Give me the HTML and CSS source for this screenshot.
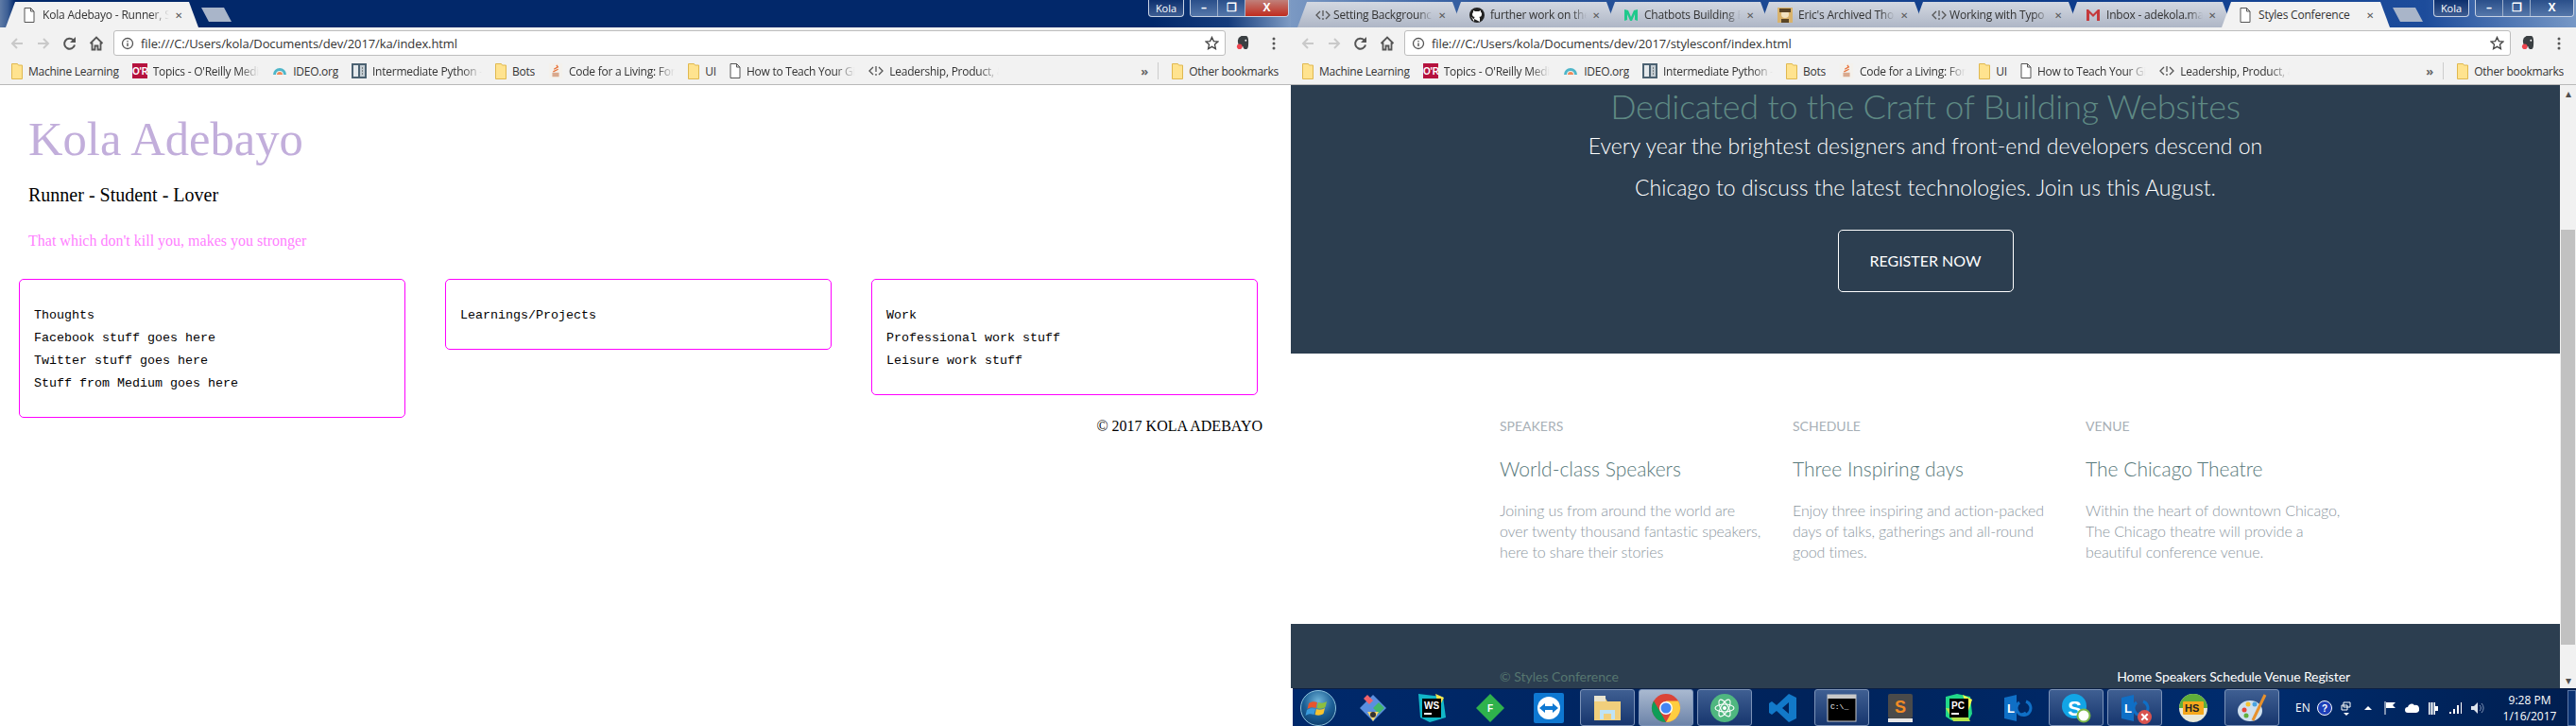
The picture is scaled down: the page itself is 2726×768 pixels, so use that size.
FILE: index.html
```html
<!DOCTYPE html>
<html>
<head>
    <title>Two browser windows</title>
    <link rel="stylesheet" href="styles.css">
</head>
<body>
    <!-- Shared icons -->
    <svg class="icon-defs">
        <defs>
            <radialGradient id="orb-glow" cx="50%" cy="30%" r="75%"><stop offset="0" stop-color="#6fb4d8"/><stop offset=".55" stop-color="#1c5f96"/><stop offset="1" stop-color="#0b3a68"/></radialGradient>
        </defs>
        <symbol id="i-folder" viewBox="0 0 12 18"><path d="M.5 1.5h6l1 1.5h4v14.500h-11z" fill="#ffe38f" stroke="#e0b84f"/></symbol>
        <symbol id="i-page" viewBox="0 0 12 16"><path d="M1 .5h6.500l3.500 3.500v11.500h-10z M7.500 .5v3.500h3.500" fill="#fff" stroke="#555"/></symbol>
        <symbol id="i-code" viewBox="0 0 16 12"><path d="M5 2l-4 4 4 4M11 2l4 4-4 4M8 1v6M8 9v2" fill="none" stroke="#555" stroke-width="1.300"/></symbol>
        <symbol id="i-oreilly" viewBox="0 0 16 16"><rect width="16" height="16" fill="#b5123e"/><text x="0" y="12" font-size="10" font-weight="700" fill="#fff" font-family="Liberation Sans">O'R</text></symbol>
        <symbol id="i-ideo" viewBox="0 0 16 10"><path d="M1 9a7 7 0 0 1 14 0h-3a4 4 0 0 0-8 0z" fill="#4fb6c9"/><path d="M5 9a3 3 0 0 1 6 0z" fill="#ef8a5a"/></symbol>
        <symbol id="i-grid" viewBox="0 0 16 16"><rect width="16" height="16" fill="#4c6272"/><rect x="2" y="2" width="5" height="12" fill="#e5e9ec"/><rect x="9" y="2" width="5" height="12" fill="#c3ccd2"/><path d="M11 5h1M11 8h1M11 11h1" stroke="#333"/></symbol>
        <symbol id="i-stack" viewBox="0 0 16 18"><rect width="16" height="18" fill="#f4f1ec"/><path d="M4 11h8v5H4z" fill="#d9a98d"/><path d="M5 10l6-3M6 7l5-3M9 2l2 3" stroke="#e8743b" stroke-width="1.500"/></symbol>
        <symbol id="i-back" viewBox="0 0 16 16"><path d="M14 8H3M8 3L3 8l5 5" fill="none" stroke="currentColor" stroke-width="2"/></symbol>
        <symbol id="i-forward" viewBox="0 0 16 16"><path d="M2 8h11M8 3l5 5-5 5" fill="none" stroke="currentColor" stroke-width="2"/></symbol>
        <symbol id="i-reload" viewBox="0 0 16 16"><path d="M13 9.500a5.500 5.500 0 1 1-1.500-5.200" fill="none" stroke="#555" stroke-width="2"/><path d="M14 1v6H8z" fill="#555"/></symbol>
        <symbol id="i-home" viewBox="0 0 16 16"><path d="M1.500 8L8 1.500 14.500 8M3.500 7v7.500h3v-4h3v4h3V7" fill="none" stroke="#555" stroke-width="1.800"/></symbol>
        <symbol id="i-info" viewBox="0 0 16 16"><circle cx="8" cy="8" r="6.300" fill="none" stroke="#555" stroke-width="1.500"/><path d="M8 4.500v1.500M8 7.500v4" stroke="#555" stroke-width="1.600"/></symbol>
        <symbol id="i-star" viewBox="0 0 16 16"><path d="M8 1.500l2 4.500 4.800.5-3.600 3.200 1 4.800L8 12.100 3.800 14.500l1-4.800L1.200 6.500 6 6z" fill="none" stroke="#444" stroke-width="1.400"/></symbol>
        <symbol id="i-evernote" viewBox="0 0 16 18"><path d="M3 3l3-2h5c2 0 3 2 3 6 0 5 0 9-3 9-2 0-3-1-3-3H5C3 13 2 9 2 6z" fill="#3a3f42"/><circle cx="4" cy="13" r="3" fill="#f0444f"/><circle cx="11" cy="6" r="1" fill="#fff"/></symbol>
        <symbol id="i-dots" viewBox="0 0 4 16"><circle cx="2" cy="3" r="1.500" fill="#555"/><circle cx="2" cy="8" r="1.500" fill="#555"/><circle cx="2" cy="13" r="1.500" fill="#555"/></symbol>
        <symbol id="i-lync" viewBox="0 0 32 32"><path d="M2 5l13-3v28L2 27z" fill="#0f6fc6"/><text x="5" y="21" font-size="13" font-weight="700" fill="#fff" font-family="Liberation Sans">L</text><path d="M25 9a7.500 7.500 0 1 1-7 1M17 22a7.500 7.500 0 0 0 8-1" fill="none" stroke="#0f6fc6" stroke-width="3"/></symbol>
    </svg>

    <div class="desktop">
        <!-- Left window -->
        <div class="window window-left">
            <div class="titlebar titlebar-left">
                <div class="tab tab-active tab-wide">
                    <svg class="tab-icon"><use href="#i-page"/></svg>
                    <span class="tab-title">Kola Adebayo - Runner, S</span>
                    <span class="tab-close">&#10005;</span>
                </div>
                <div class="tab-new"></div>
                <div class="profile">Kola</div>
                <div class="win-buttons">
                    <span class="win-btn">&#8211;</span>
                    <span class="win-btn">&#10064;</span>
                    <span class="win-btn win-close">X</span>
                </div>
            </div>
            <div class="toolbar">
                <svg class="nav-icon nav-off"><use href="#i-back"/></svg>
                <svg class="nav-icon nav-off"><use href="#i-forward"/></svg>
                <svg class="nav-icon"><use href="#i-reload"/></svg>
                <svg class="nav-icon"><use href="#i-home"/></svg>
                <div class="omnibox">
                    <svg class="omni-info"><use href="#i-info"/></svg>
                    <span class="omni-url">file:///C:/Users/kola/Documents/dev/2017/ka/index.html</span>
                    <svg class="omni-star"><use href="#i-star"/></svg>
                </div>
                <svg class="ext-icon"><use href="#i-evernote"/></svg>
                <svg class="menu-icon"><use href="#i-dots"/></svg>
            </div>
            <div class="bookmarks">
                <span class="bm"><svg class="bm-folder"><use href="#i-folder"/></svg><span class="bm-label">Machine Learning</span></span>
                <span class="bm"><svg class="bm-icon"><use href="#i-oreilly"/></svg><span class="bm-label bm-fade">Topics - O'Reilly Medi</span></span>
                <span class="bm"><svg class="bm-icon"><use href="#i-ideo"/></svg><span class="bm-label">IDEO.org</span></span>
                <span class="bm"><svg class="bm-icon"><use href="#i-grid"/></svg><span class="bm-label bm-fade">Intermediate Python -</span></span>
                <span class="bm"><svg class="bm-folder"><use href="#i-folder"/></svg><span class="bm-label">Bots</span></span>
                <span class="bm"><svg class="bm-icon"><use href="#i-stack"/></svg><span class="bm-label bm-fade">Code for a Living: For</span></span>
                <span class="bm"><svg class="bm-folder"><use href="#i-folder"/></svg><span class="bm-label">UI</span></span>
                <span class="bm"><svg class="bm-page"><use href="#i-page"/></svg><span class="bm-label bm-fade">How to Teach Your Gi</span></span>
                <span class="bm"><svg class="bm-icon"><use href="#i-code"/></svg><span class="bm-label bm-fade">Leadership, Product, &amp;</span></span>
                <span class="bm-more">&raquo;</span>
                <span class="bm"><svg class="bm-folder"><use href="#i-folder"/></svg><span class="bm-label">Other bookmarks</span></span>
            </div>
            <div class="ka-page">
                <h1 class="ka-name">Kola Adebayo</h1>
                <p class="ka-tagline">Runner - Student - Lover</p>
                <p class="ka-quote">That which don't kill you, makes you stronger</p>
                <div class="ka-boxes">
                    <div class="ka-box">
                        <div>Thoughts</div>
                        <div>Facebook stuff goes here</div>
                        <div>Twitter stuff goes here</div>
                        <div>Stuff from Medium goes here</div>
                    </div>
                    <div class="ka-box">
                        <div>Learnings/Projects</div>
                    </div>
                    <div class="ka-box">
                        <div>Work</div>
                        <div>Professional work stuff</div>
                        <div>Leisure work stuff</div>
                    </div>
                </div>
                <p class="ka-footer">&copy; 2017 KOLA ADEBAYO</p>
            </div>
        </div>

        <!-- Right window -->
        <div class="window window-right">
            <div class="titlebar titlebar-right">
                <div class="tab"><svg class="tab-icon-code"><use href="#i-code"/></svg><span class="tab-title">Setting Backgrounc</span><span class="tab-close">&#10005;</span></div>
                <div class="tab"><svg class="tab-icon-round" viewBox="0 0 16 16"><circle cx="8" cy="8" r="8" fill="#222"/><path d="M5 15v-3c-2 0-2-2-3-2M11 15v-3c0-1 0-2-1-2 2 0 3-1 3-3 0-1 0-2-1-2V3l-2 1H6L4 3v2C3 6 3 7 3 7c0 2 1 3 3 3-1 0-1 1-1 2" fill="#fff"/></svg><span class="tab-title">further work on the</span><span class="tab-close">&#10005;</span></div>
                <div class="tab"><svg class="tab-icon-round" viewBox="0 0 16 16"><path d="M1 2l4 1 3 7 3-7 4-1v12l-3-1V7l-3 7H7L4 7v6l-3 1z" fill="#1fc98b"/></svg><span class="tab-title">Chatbots Building P</span><span class="tab-close">&#10005;</span></div>
                <div class="tab"><svg class="tab-icon-round" viewBox="0 0 16 16"><rect width="16" height="16" fill="#d9b36c"/><circle cx="8" cy="7" r="4" fill="#f2e2c0"/><path d="M2 1h12v4H2zM4 12h8v4H4z" fill="#5a4526"/></svg><span class="tab-title">Eric's Archived Thou</span><span class="tab-close">&#10005;</span></div>
                <div class="tab"><svg class="tab-icon-code"><use href="#i-code"/></svg><span class="tab-title">Working with Typo</span><span class="tab-close">&#10005;</span></div>
                <div class="tab"><svg class="tab-icon-round" viewBox="0 0 16 16"><path d="M1 2h2l5 5 5-5h2v12h-3V6L8 10 4 6v8H1z" fill="#c5393c"/></svg><span class="tab-title">Inbox - adekola.ma</span><span class="tab-close">&#10005;</span></div>
                <div class="tab tab-active"><svg class="tab-icon"><use href="#i-page"/></svg><span class="tab-title tab-full">Styles Conference</span><span class="tab-close">&#10005;</span></div>
                <div class="tab-new"></div>
                <div class="profile">Kola</div>
                <div class="win-buttons">
                    <span class="win-btn">&#8211;</span>
                    <span class="win-btn">&#10064;</span>
                    <span class="win-btn win-close-idle">X</span>
                </div>
            </div>
            <div class="toolbar">
                <svg class="nav-icon nav-off"><use href="#i-back"/></svg>
                <svg class="nav-icon nav-off"><use href="#i-forward"/></svg>
                <svg class="nav-icon"><use href="#i-reload"/></svg>
                <svg class="nav-icon"><use href="#i-home"/></svg>
                <div class="omnibox">
                    <svg class="omni-info"><use href="#i-info"/></svg>
                    <span class="omni-url">file:///C:/Users/kola/Documents/dev/2017/stylesconf/index.html</span>
                    <svg class="omni-star"><use href="#i-star"/></svg>
                </div>
                <svg class="ext-icon"><use href="#i-evernote"/></svg>
                <svg class="menu-icon"><use href="#i-dots"/></svg>
            </div>
            <div class="bookmarks">
                <span class="bm"><svg class="bm-folder"><use href="#i-folder"/></svg><span class="bm-label">Machine Learning</span></span>
                <span class="bm"><svg class="bm-icon"><use href="#i-oreilly"/></svg><span class="bm-label bm-fade">Topics - O'Reilly Medi</span></span>
                <span class="bm"><svg class="bm-icon"><use href="#i-ideo"/></svg><span class="bm-label">IDEO.org</span></span>
                <span class="bm"><svg class="bm-icon"><use href="#i-grid"/></svg><span class="bm-label bm-fade">Intermediate Python -</span></span>
                <span class="bm"><svg class="bm-folder"><use href="#i-folder"/></svg><span class="bm-label">Bots</span></span>
                <span class="bm"><svg class="bm-icon"><use href="#i-stack"/></svg><span class="bm-label bm-fade">Code for a Living: For</span></span>
                <span class="bm"><svg class="bm-folder"><use href="#i-folder"/></svg><span class="bm-label">UI</span></span>
                <span class="bm"><svg class="bm-page"><use href="#i-page"/></svg><span class="bm-label bm-fade">How to Teach Your Gi</span></span>
                <span class="bm"><svg class="bm-icon"><use href="#i-code"/></svg><span class="bm-label bm-fade">Leadership, Product, &amp;</span></span>
                <span class="bm-more">&raquo;</span>
                <span class="bm"><svg class="bm-folder"><use href="#i-folder"/></svg><span class="bm-label">Other bookmarks</span></span>
            </div>
            <div class="conf-view">
                <div class="conf-page">
                    <div class="hero">
                        <h2 class="hero-title">Dedicated to the Craft of Building Websites</h2>
                        <p class="hero-text">Every year the brightest designers and front-end developers descend on Chicago to discuss the latest technologies. Join us this August.</p>
                        <a class="hero-btn">REGISTER NOW</a>
                    </div>
                    <div class="teasers">
                        <div class="teaser">
                            <h5 class="teaser-label">SPEAKERS</h5>
                            <h3 class="teaser-title">World-class Speakers</h3>
                            <p class="teaser-text">Joining us from around the world are over twenty thousand fantastic speakers, here to share their stories</p>
                        </div>
                        <div class="teaser">
                            <h5 class="teaser-label">SCHEDULE</h5>
                            <h3 class="teaser-title">Three Inspiring days</h3>
                            <p class="teaser-text">Enjoy three inspiring and action-packed days of talks, gatherings and all-round good times.</p>
                        </div>
                        <div class="teaser">
                            <h5 class="teaser-label">VENUE</h5>
                            <h3 class="teaser-title">The Chicago Theatre</h3>
                            <p class="teaser-text">Within the heart of downtown Chicago, The Chicago theatre will provide a beautiful conference venue.</p>
                        </div>
                    </div>
                    <div class="conf-footer">
                        <small class="conf-copy">&copy; Styles Conference</small>
                        <nav class="conf-nav">Home Speakers Schedule Venue Register</nav>
                    </div>
                </div>
                <div class="scrollbar">
                    <span class="scroll-arrow">&#9652;</span>
                    <div class="scroll-thumb"></div>
                    <span class="scroll-arrow scroll-down">&#9662;</span>
                </div>
            </div>
            <div class="taskbar">
                <svg class="start-orb" viewBox="0 0 40 40">
                    <circle cx="20" cy="20" r="18.500" fill="url(#orb-glow)" stroke="#8fc3dd"/>
                    <path d="M10 15c3-2 6-2 9-1l-1.500 6c-3-1-6-1-9 1z" fill="#e8552c"/><path d="M20 14c3 1 6 1 9-1l-1.500 6c-3 2-6 2-9 1z" fill="#8cbf3f"/>
                    <path d="M8 22c3-2 6-2 9-1l-1.500 6c-3-1-6-1-9 1z" fill="#3a9bdc"/><path d="M18 21c3 1 6 1 9-1l-1.500 6c-3 2-6 2-9 1z" fill="#f7c32e"/>
                </svg>
                <div class="task"><svg class="task-icon" viewBox="0 0 32 32"><path d="M16 2l14 14-14 14L2 16z" fill="#5a8fe0"/><path d="M10 2l6 6-4 4-6-6z" fill="#f0626a"/><path d="M22 10l6 6-6 6-6-6z" fill="#43b86b"/><path d="M10 20h12l-6 10z" fill="#f8d66d"/><circle cx="16" cy="23" r="3" fill="#333"/></svg></div>
                <div class="task"><svg class="task-icon" viewBox="0 0 32 32"><path d="M2 1l26 3 3 22-17 5L4 26z" fill="#12b7c8"/><path d="M20 1l9 4-5 10z" fill="#f7e24b"/><rect x="6" y="6" width="20" height="20" fill="#000"/><text x="8" y="17" font-size="10" font-weight="700" fill="#fff" font-family="Liberation Sans">WS</text><path d="M8 22h8" stroke="#fff" stroke-width="2"/></svg></div>
                <div class="task"><svg class="task-icon" viewBox="0 0 32 32"><path d="M16 1l15 15-15 15L1 16z" fill="#2fb24c"/><text x="13" y="20" font-size="10" font-weight="700" fill="#fff" font-family="Liberation Sans">F</text></svg></div>
                <div class="task"><svg class="task-icon" viewBox="0 0 32 32"><rect width="32" height="32" rx="2" fill="#0e78d2"/><circle cx="16" cy="16" r="12" fill="#fff"/><path d="M6 16l6-5v3h8v-3l6 5-6 5v-3h-8v3z" fill="#0e78d2"/></svg></div>
                <div class="task task-open task-narrow"><svg class="task-icon" viewBox="0 0 32 32"><path d="M2 6h12l2 3h14v20H2z" fill="#f1cf7c"/><path d="M2 3h12v6H2z" fill="#e9e4d0"/><path d="M8 18h16v10H8z" fill="#bfe3f5"/><path d="M12 22h8v6h-8z" fill="#f1cf7c"/></svg></div>
                <div class="task task-open task-lit"><svg class="task-icon" viewBox="0 0 32 32"><circle cx="16" cy="16" r="15" fill="#db4437"/><path d="M16 31A15 15 0 0 1 3 8.500l8 13.500z" fill="#0f9d58"/><path d="M16 31a15 15 0 0 0 13-22.500H16l5 13.500z" fill="#ffcd40"/><circle cx="16" cy="16" r="7" fill="#fff"/><circle cx="16" cy="16" r="5.500" fill="#4285f4"/></svg></div>
                <div class="task task-open"><svg class="task-icon" viewBox="0 0 32 32"><circle cx="16" cy="16" r="15" fill="#4fb780"/><g fill="none" stroke="#fff" stroke-width="1.100"><ellipse cx="16" cy="16" rx="10" ry="4"/><ellipse cx="16" cy="16" rx="10" ry="4" transform="rotate(60 16 16)"/><ellipse cx="16" cy="16" rx="10" ry="4" transform="rotate(120 16 16)"/></g><circle cx="16" cy="16" r="2" fill="#fff"/></svg></div>
                <div class="task"><svg class="task-icon" viewBox="0 0 32 32"><path d="M22 1l8 4v22l-8 4L9 19l-5 4-3-2V11l3-2 5 4zM22 10l-7 6 7 6z" fill="#1279c9" fill-rule="evenodd"/></svg></div>
                <div class="task task-open"><svg class="task-icon" viewBox="0 0 32 32"><rect x="1" y="2" width="30" height="28" fill="#000" stroke="#c8c8c8"/><rect x="1" y="2" width="30" height="4" fill="#c8c8c8"/><text x="4" y="17" font-size="8" fill="#fff" font-family="Liberation Mono">C:\_</text></svg></div>
                <div class="task"><svg class="task-icon" viewBox="0 0 32 32"><rect x="3" y="1" width="26" height="26" rx="2" fill="#4a4a4a"/><path d="M3 27h26v4H3z" fill="#e6e6e6"/><text x="10" y="21" font-size="18" font-weight="700" fill="#f28b25" font-family="Liberation Sans">S</text></svg></div>
                <div class="task"><svg class="task-icon" viewBox="0 0 32 32"><path d="M2 4l12-3 14 3 2 18-4 8-18-1-6-4z" fill="#21d789"/><path d="M20 2l10 5-4 12z" fill="#fcf84a"/><path d="M2 16l8 14 18 0-6-12z" fill="#b4e34a"/><rect x="6" y="6" width="20" height="20" fill="#000"/><text x="8" y="17" font-size="10" font-weight="700" fill="#fff" font-family="Liberation Sans">PC</text><path d="M8 22h8" stroke="#fff" stroke-width="2"/></svg></div>
                <div class="task"><svg class="task-icon"><use href="#i-lync"/></svg></div>
                <div class="task task-open"><svg class="task-icon" viewBox="0 0 32 32"><circle cx="14" cy="14" r="13" fill="#12a5e6"/><text x="7" y="24" font-size="22" font-weight="700" fill="#fff" font-family="Liberation Sans">S</text><circle cx="24" cy="24" r="6.500" fill="#fff" stroke="#7ab648" stroke-width="2"/></svg></div>
                <div class="task task-open"><svg class="task-icon"><use href="#i-lync"/></svg><svg class="task-badge" viewBox="0 0 14 14"><circle cx="7" cy="7" r="7" fill="#d9534f"/><path d="M4 4l6 6M10 4l-6 6" stroke="#fff" stroke-width="2"/></svg></div>
                <div class="task"><svg class="task-icon" viewBox="0 0 32 32"><circle cx="16" cy="16" r="15" fill="#e8e8d8"/><path d="M1 16a15 15 0 0 1 30 0z" fill="#5fae3a"/><rect x="5" y="9" width="22" height="14" rx="1" fill="#f5a81c"/><text x="7" y="20" font-size="11" font-weight="700" fill="#222" font-family="Liberation Sans">HS</text></svg></div>
                <div class="task task-open"><svg class="task-icon" viewBox="0 0 32 32"><ellipse cx="14" cy="19" rx="13" ry="11" fill="#cfe0ee"/><circle cx="8" cy="18" r="2.500" fill="#e8463a"/><circle cx="12" cy="12" r="2.500" fill="#f7c32e"/><circle cx="19" cy="12" r="2.500" fill="#4aa3e0"/><circle cx="10" cy="24" r="2.500" fill="#5fae3a"/><path d="M30 2L17 29" stroke="#e7912c" stroke-width="3"/></svg></div>
                <div class="tray">
                    <span class="tray-lang">EN</span>
                    <svg class="tray-icon" viewBox="0 0 16 16"><circle cx="8" cy="8" r="7.500" fill="#1d3fb8" stroke="#fff"/><text x="5" y="12" font-size="10" font-weight="700" fill="#fff" font-family="Liberation Sans">?</text></svg>
                    <svg class="tray-icon" viewBox="0 0 16 16"><path d="M5 2h7v5H5zM3 5h6v5H3z" fill="#00275f" stroke="#fff"/><path d="M5 13h6l-3 3z" fill="#fff"/></svg>
                    <svg class="tray-icon" viewBox="0 0 16 16"><path d="M4 10h8L8 6z" fill="#fff"/></svg>
                    <svg class="tray-icon" viewBox="0 0 16 16"><path d="M3 1v14" stroke="#fff"/><path d="M4 2h10l-3 3 3 3H4z" fill="#fff"/></svg>
                    <svg class="tray-icon" viewBox="0 0 16 16"><path d="M4 13a3 3 0 0 1 0-6 4 4 0 0 1 7-2 4 4 0 0 1 2 8z" fill="#fff"/></svg>
                    <svg class="tray-icon" viewBox="0 0 16 16"><path d="M3 2h7v13H3zM10 6h3v5h-3z" fill="#fff"/><path d="M5 2v13M8 2v13" stroke="#00275f"/></svg>
                    <svg class="tray-icon" viewBox="0 0 16 16"><path d="M2 12h2v2H2zM6 9h2v5H6zM10 5h2v9h-2zM14 2h1v12h-1z" fill="#fff"/></svg>
                    <svg class="tray-icon" viewBox="0 0 16 16"><path d="M2 6h3l4-4v12l-4-4H2z" fill="#dfe5ee"/><path d="M11 5a4 4 0 0 1 0 6M13 3a7 7 0 0 1 0 10" fill="none" stroke="#7f93b5"/></svg>
                </div>
                <div class="clock"><div>9:28 PM</div><div>1/16/2017</div></div>
                <div class="show-desktop"></div>
            </div>
        </div>
    </div>
</body>
</html>
```

FILE: styles.css
```css
/* Reset default margin and padding */
* {
    margin: 0;
    padding: 0;
    box-sizing: border-box;
}

body {
    width: 2726px;
    height: 768px;
    overflow: hidden;
    background-color: #fff;
    font-family: "Open Sans", sans-serif;
}

.icon-defs {
    position: absolute;
    width: 0;
    height: 0;
}

.desktop {
    display: flex;
    height: 768px;
}

.window {
    display: flex;
    flex-direction: column;
    height: 768px;
    flex: none;
}

.window-left {
    width: 1366px;
}

.window-right {
    width: 1360px;
}

/* Title bar and tabs */
.titlebar {
    display: flex;
    align-items: flex-end;
    height: 29px;
    flex: none;
    position: relative;
    background: #02286a;
}

.titlebar-left {
    padding-left: 6px;
    background: linear-gradient(90deg, #5f7ba6 0, #3d5f95 8px, #02286a 16px, #02286a 1220px, #153c7c 1300px, #7f9cc4 1366px);
}

.titlebar-right {
    padding-left: 7px;
    background: linear-gradient(90deg, #7b99c3 0, #2c579c 200px, #0d3b8a 800px, #1d4c9b 1200px, #7798c6 1360px);
}

.tab {
    display: flex;
    align-items: center;
    width: 174px;
    height: 27px;
    margin-right: -11px;
    padding: 0 17px 0 19px;
    font-size: 12px;
    letter-spacing: -0.2px;
    color: #333;
    clip-path: polygon(0 100%, 10px 0, calc(100% - 10px) 0, 100% 100%);
    background: linear-gradient(#d3d8e1, #aeb6c6);
    flex: none;
}

.tab-active {
    background: #f2f2f2;
    width: 178px;
}

.tab-wide {
    width: 204px;
}

.tab-title {
    flex: 1;
    min-width: 0;
    overflow: hidden;
    white-space: nowrap;
    -webkit-mask-image: linear-gradient(90deg, #000 85%, transparent 100%);
    mask-image: linear-gradient(90deg, #000 85%, transparent 100%);
}

.tab-full {
    -webkit-mask-image: none;
    mask-image: none;
}

.tab-close {
    margin-left: 6px;
    font-size: 10px;
    color: #5a5a5a;
}

.tab-icon {
    width: 12px;
    height: 16px;
    margin-right: 8px;
    flex: none;
}

.tab-icon-code {
    width: 16px;
    height: 12px;
    margin-right: 3px;
    flex: none;
}

.tab-icon-round {
    width: 16px;
    height: 16px;
    margin-right: 6px;
    flex: none;
}

.tab-new {
    width: 32px;
    height: 15px;
    margin: 0 0 6px 14px;
    background: #a9b5c9;
    clip-path: polygon(0 0, 75% 0, 100% 100%, 25% 100%);
    flex: none;
}

.profile {
    width: 38px;
    height: 18px;
    margin: 0 0 11px auto;
    font-size: 11px;
    line-height: 17px;
    text-align: center;
    color: #fff;
    border: 1px solid #c7d2e4;
    border-top: none;
    border-radius: 0 0 4px 4px;
    background: linear-gradient(#0d2f6d, #3d5d93);
}

.win-buttons {
    display: flex;
    width: 105px;
    height: 18px;
    margin: 0 2px 11px 6px;
    border: 1px solid #c7d2e4;
    border-top: none;
    border-radius: 0 0 4px 4px;
    overflow: hidden;
}

.win-btn {
    flex: 1;
    font-size: 12px;
    font-weight: 700;
    line-height: 15px;
    text-align: center;
    color: #fff;
    border-right: 1px solid #9fb1cc;
    background: linear-gradient(#2a4f8a, #5577aa);
}

.win-close {
    flex: 1.6;
    border-right: none;
    background: linear-gradient(#c0807a, #c02c1e);
}

.win-close-idle {
    flex: 1.6;
    border-right: none;
}

/* Toolbar */
.toolbar {
    display: flex;
    align-items: center;
    height: 33px;
    flex: none;
    padding-left: 10px;
    background-color: #f2f2f2;
}

.nav-icon {
    width: 16px;
    height: 16px;
    margin-right: 12px;
    color: #555;
    flex: none;
}

.nav-off {
    color: #c9c9c9;
}

.omnibox {
    display: flex;
    align-items: center;
    flex: 1;
    height: 27px;
    margin-left: -2px;
    padding: 0 6px 0 7px;
    background-color: #fff;
    border: 1px solid #bdbdbd;
    border-radius: 3px;
}

.omni-info {
    width: 14px;
    height: 14px;
    margin-right: 7px;
}

.omni-url {
    flex: 1;
    font-size: 13px;
    letter-spacing: -0.1px;
    color: #333;
}

.omni-star {
    width: 15px;
    height: 15px;
}

.ext-icon {
    width: 15px;
    height: 17px;
    margin-left: 11px;
}

.menu-icon {
    width: 4px;
    height: 16px;
    margin: 0 16px 0 23px;
}

/* Bookmarks bar */
.bookmarks {
    display: flex;
    align-items: center;
    gap: 14px;
    height: 28px;
    flex: none;
    padding: 0 13px 1px 12px;
    background-color: #f2f2f2;
    border-bottom: 1px solid #b9b9b9;
}

.bm {
    display: flex;
    align-items: center;
    gap: 6px;
    flex: none;
    font-size: 12px;
    letter-spacing: -0.25px;
    color: #333;
}

.bm-label {
    display: block;
    max-width: 116px;
    overflow: hidden;
    white-space: nowrap;
}

.bm-fade {
    -webkit-mask-image: linear-gradient(90deg, #000 82%, transparent 100%);
    mask-image: linear-gradient(90deg, #000 82%, transparent 100%);
}

.bm-folder {
    width: 12px;
    height: 18px;
}

.bm-icon {
    width: 16px;
    height: 16px;
}

.bm-page {
    width: 12px;
    height: 16px;
}

.bm-more {
    margin-left: auto;
    padding-right: 10px;
    font-size: 13px;
    font-weight: 700;
    color: #666;
    border-right: 1px solid #ccc;
}

/* Left page */
.ka-page {
    flex: 1;
    background-color: #fff;
    font-family: "Liberation Serif", serif;
}

.ka-name {
    margin: 28px 0 0 30px;
    font-size: 50.6px;
    font-weight: 400;
    line-height: 58px;
    color: #c2aedb;
}

.ka-tagline {
    margin: 18px 0 0 30px;
    font-size: 20px;
    line-height: 24px;
    color: #000;
}

.ka-quote {
    margin: 27px 0 0 30px;
    font-size: 16px;
    line-height: 20px;
    color: #ff80ff;
}

.ka-boxes {
    display: flex;
    align-items: flex-start;
    gap: 42px;
    margin: 30px 0 0 20px;
}

.ka-box {
    width: 409px;
    padding: 26px 15px 23px;
    font-family: "Liberation Mono", monospace;
    font-size: 13.33px;
    line-height: 24px;
    color: #000;
    border: 1px solid #ff00ff;
    border-radius: 5px;
}

.ka-footer {
    padding: 1px 30px 0 0;
    font-size: 16px;
    line-height: 16px;
    text-align: right;
    color: #000;
}

/* Right page */
.conf-view {
    display: flex;
    flex: 1;
    min-height: 0;
    background-color: #fff;
}

.conf-page {
    display: flex;
    flex-direction: column;
    flex: 1;
    font-family: "Lato", sans-serif;
    font-weight: 300;
}

.hero {
    display: flex;
    flex-direction: column;
    align-items: center;
    height: 284px;
    flex: none;
    text-align: center;
    background-color: #2c3e50;
}

.hero-title {
    font-size: 36px;
    font-weight: 300;
    letter-spacing: -0.24px;
    line-height: 44px;
    color: #5f8a84;
}

.hero-text {
    width: 780px;
    margin-top: -2px;
    font-size: 23px;
    line-height: 44px;
    color: #fff;
}

.hero-btn {
    width: 186px;
    height: 66px;
    margin-top: 23px;
    font-size: 16px;
    font-weight: 400;
    line-height: 64px;
    color: #fff;
    border: 1px solid #fff;
    border-radius: 5px;
}

.teasers {
    display: grid;
    grid-template-columns: repeat(3, 280px);
    gap: 30px;
    height: 286px;
    flex: none;
    padding: 68px 0 0 221px;
}

.teaser-label {
    font-size: 14px;
    font-weight: 400;
    line-height: 18px;
    color: #a7afb6;
}

.teaser-title {
    margin-top: 21px;
    font-size: 21px;
    font-weight: 300;
    line-height: 30px;
    color: #57787a;
}

.teaser-text {
    margin-top: 18px;
    font-size: 16px;
    letter-spacing: -0.12px;
    line-height: 22px;
    color: #8d989f;
}

.conf-footer {
    display: flex;
    justify-content: space-between;
    align-items: center;
    flex: 1;
    padding: 44px 222px 0 221px;
    font-size: 14px;
    line-height: 24px;
    background-color: #2c3e50;
}

.conf-copy {
    font-size: 14px;
    font-weight: 400;
    color: #56766f;
}

.conf-nav {
    font-weight: 400;
    letter-spacing: -0.1px;
    color: #fff;
}

/* Scrollbar */
.scrollbar {
    display: flex;
    flex-direction: column;
    width: 17px;
    flex: none;
    background-color: #f1f1f1;
}

.scroll-arrow {
    height: 17px;
    font-size: 12px;
    line-height: 17px;
    text-align: center;
    color: #505050;
    flex: none;
}

.scroll-thumb {
    height: 439px;
    margin: 136px 1px 0;
    background-color: #c1c1c1;
}

.scroll-down {
    margin-top: auto;
}

/* Taskbar */
.taskbar {
    display: flex;
    align-items: center;
    gap: 4px;
    height: 40px;
    flex: none;
    margin-left: 2px;
    border-top: 1px solid #0b1f44;
    background: linear-gradient(90deg, #00296b, #00235b 40%, #002c6e 75%, #001e4f);
}

.start-orb {
    width: 40px;
    height: 40px;
    margin: 0 5px 0 7px;
    flex: none;
}

.task {
    display: flex;
    align-items: center;
    justify-content: center;
    position: relative;
    width: 58px;
    height: 39px;
    flex: none;
    border-radius: 3px;
}

.task-open {
    border: 1px solid #7c93b8;
    background: linear-gradient(#3f5f92, #17366e);
}

.task-lit {
    background: linear-gradient(#a9b9d0, #6d84a9);
}

.task-icon {
    width: 32px;
    height: 32px;
}

.task-badge {
    position: absolute;
    right: 10px;
    bottom: 1px;
    width: 15px;
    height: 15px;
}

.tray {
    display: flex;
    align-items: center;
    gap: 7px;
    margin-left: 13px;
    color: #fff;
    font-size: 12px;
    flex: none;
}

.tray-lang {
    width: 16px;
}

.tray-icon {
    width: 16px;
    height: 16px;
}

.clock {
    width: 72px;
    margin-left: 8px;
    font-size: 12px;
    line-height: 17px;
    text-align: center;
    color: #fff;
    flex: none;
}

.show-desktop {
    width: 14px;
    height: 38px;
    margin-left: auto;
    border: 1px solid #5d7aa8;
    background: #0b3373;
}
```
